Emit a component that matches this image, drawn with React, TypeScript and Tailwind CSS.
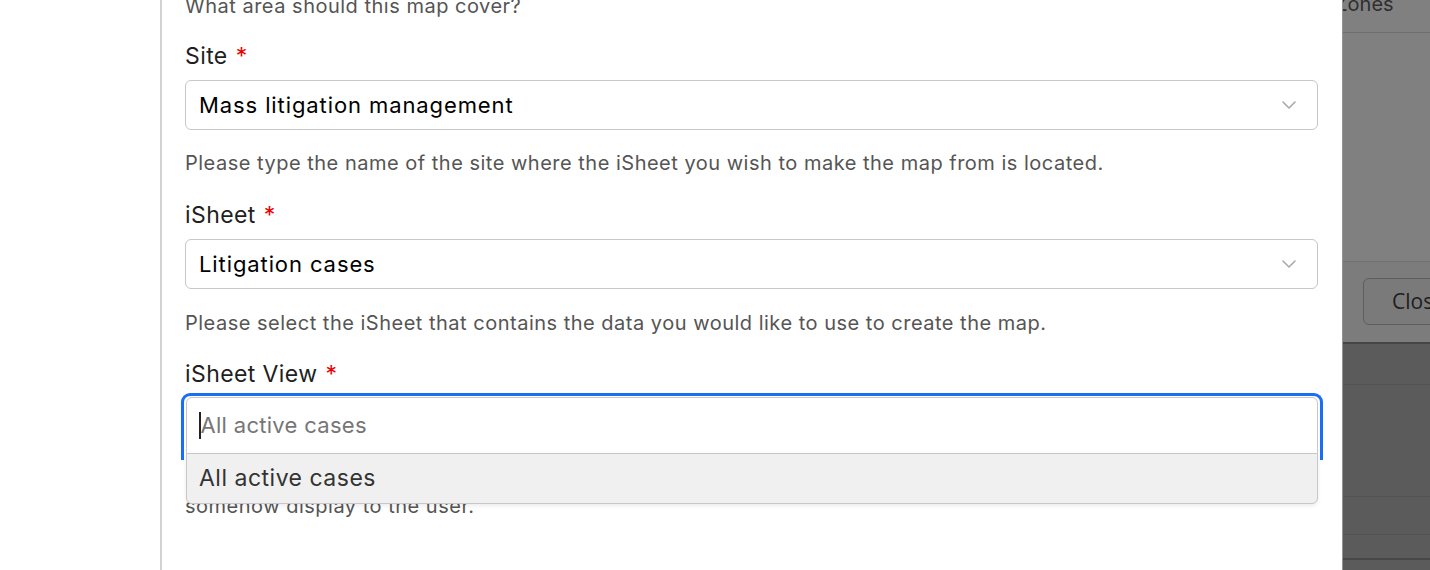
import React from "react";

function Chevron() {
  return (
    <svg width="16" height="10" viewBox="0 0 16 10" className="shrink-0">
      <path d="M2 2 L8 8 L14 2" fill="none" stroke="#a9a9ae" strokeWidth="1.6" strokeLinecap="round" strokeLinejoin="round" />
    </svg>
  );
}

function Label({ text }: { text: string }) {
  return (
    <div className="h-[30px] flex items-center text-[23px] tracking-[0.4px] text-[#1f1f1f] leading-[30px]">
      {text}
      <span className="ml-[8px] text-[#ee0000]">*</span>
    </div>
  );
}

function SelectBox({ value }: { value: string }) {
  return (
    <div className="mt-[9px] h-[50px] w-full rounded-[6px] border border-[#c6c6cc] bg-white flex items-center justify-between pl-[13px] pr-[20px]">
      <span className="text-[22px] font-normal tracking-[0.9px] text-black">{value}</span>
      <Chevron />
    </div>
  );
}

function Help({ children, className = "" }: { children: React.ReactNode; className?: string }) {
  return <div className={"text-[20px] tracking-[0.5px] leading-[24px] text-[#555555] " + className}>{children}</div>;
}

export default function App() {
  return (
    <div
      className="w-[1430px] h-[570px] overflow-hidden flex bg-white"
      style={{ fontFamily: "Inter, 'Noto Sans', sans-serif" }}
    >
      {/* page backdrop left of the panel */}
      <div className="w-[160px] shrink-0 bg-white" />

      {/* form panel */}
      <div className="w-[1182px] shrink-0 border-l-2 border-[#d2d2d2] pl-[23px] pr-[24px] flex flex-col">
        <Help className="-mt-[6px]">What area should this map cover?</Help>

        <div className="mt-[23px]">
          <Label text="Site" />
          <SelectBox value="Mass litigation management" />
        </div>
        <Help className="mt-[21px]">
          Please type the name of the site where the iSheet you wish to make the map from is located.
        </Help>

        <div className="mt-[25px]">
          <Label text="iSheet" />
          <SelectBox value="Litigation cases" />
        </div>
        <Help className="mt-[22px]">
          Please select the iSheet that contains the data you would like to use to create the map.
        </Help>

        <div className="mt-[24px]">
          <Label text="iSheet View" />
          <div className="relative mt-[4px] -ml-[4px] w-[1142px] h-[67px] border-[3px] border-b-0 border-[#1a6ef5] rounded-t-[9px] pt-[1px] px-[2px]">
            <div className="h-[70px] border border-[#c6c6cc] rounded-t-[6px] bg-white flex items-start pl-[12px] pt-[13px]">
              <span className="w-[1.5px] h-[27px] bg-[#222] mt-[1px]" />
              <span className="text-[22px] leading-[29px] tracking-[0.3px] text-[#767676]">All active cases</span>
            </div>
            {/* open option list */}
            <div className="absolute z-10 left-[2px] top-[57px] w-[1132px] h-[51px] bg-[#f0f0f0] border border-[#c6c6cc] rounded-b-[6px] shadow-[0_2px_4px_rgba(0,0,0,0.08)] flex items-center pl-[12px]">
              <span className="text-[23px] tracking-[0.5px] text-[#333333]">All active cases</span>
            </div>
          </div>
          <Help className="mt-[10px]">
            <div>Select the view of the iSheet that filters the items you would like the map to</div>
            <div>somehow display to the user.</div>
          </Help>
        </div>
      </div>

      {/* dimmed page behind the panel */}
      <div className="flex-1 border-l border-[#939393] bg-[#808080] flex flex-col overflow-hidden">
        <div className="h-[33px] border-b border-[#6e6e6e] relative">
          <div className="text-[20px] leading-[24px] text-[#2f2f2f] -mt-[8px] -ml-[8px] whitespace-nowrap">Zones</div>
        </div>
        <div className="h-[229px] border-b border-[#717171]" />
        <div className="h-[80px] bg-[#7c7c7c] pl-[20px] pt-[16px]">
          <div className="w-[120px] h-[47px] rounded-[6px] border border-[#5e5e5e] bg-[#7a7a7a] flex items-center pl-[28px] text-[21px] text-[#1e1e1e]" style={{ fontFamily: "'Open Sans', sans-serif" }}>
            Close
          </div>
        </div>
        <div className="h-[2px] bg-[#454545]" />
        <div className="flex-1 bg-[#5b5b5b] flex flex-col">
          <div className="h-[41px] border-b border-[#535353]" />
          <div className="h-[112px] border-b border-[#535353]" />
          <div className="h-[38px] border-b border-[#535353]" />
          <div className="h-[25px] border-b-2 border-[#474747]" />
        </div>
      </div>
    </div>
  );
}
